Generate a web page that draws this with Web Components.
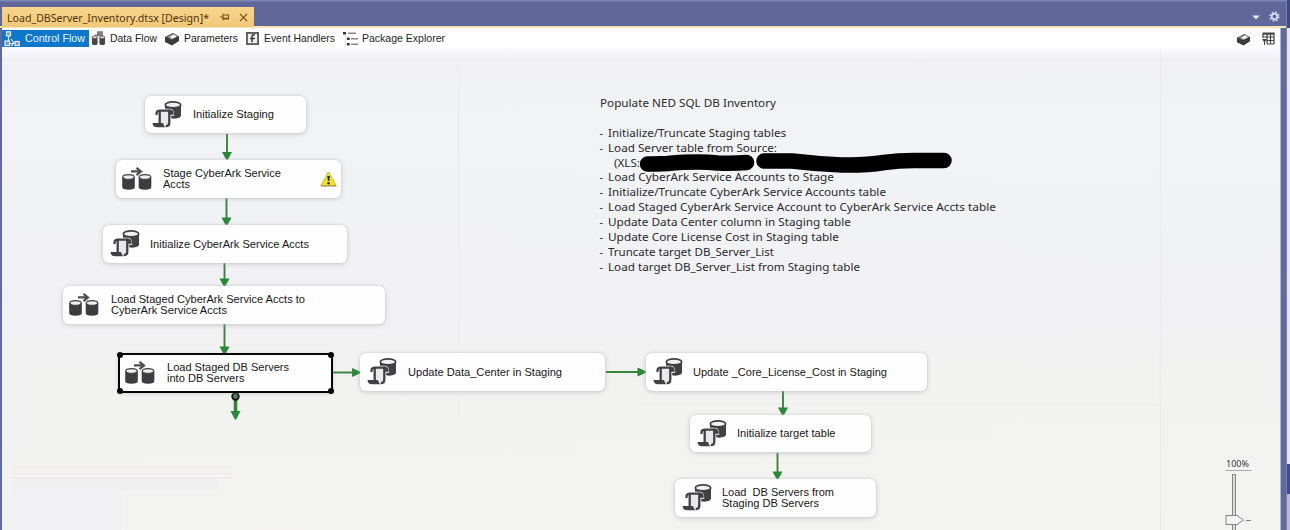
<!DOCTYPE html>
<html lang="en"><head><meta charset="utf-8"><title>Load_DBServer_Inventory.dtsx</title>
<style>html,body{margin:0;width:1290px;height:530px;overflow:hidden;background:#62699e}</style></head>
<body><package-designer></package-designer>
<script>
// Single line of text stretched to an exact advance width.
class FitText extends HTMLElement{
  connectedCallback(){
    const r=this.attachShadow({mode:'open'});
    r.innerHTML='<style>:host{display:block;white-space:pre}span{display:inline-block;transform-origin:0 50%}</style><span><slot></slot></span>';
    const s=r.querySelector('span'),w=+this.getAttribute('width');
    const n=s.getBoundingClientRect().width;
    this.style.width=w+'px';
    s.style.transform=`scaleX(${w/n})`;
  }
}

const ICONS={
script:['0 0 30 27','<path d="M13 4v8l6 5.300c5 1 10-.3 10-3V4z" fill="#414145"/><ellipse cx="21" cy="3.900" rx="7.700" ry="3" fill="#f1f1f1" stroke="#414145" stroke-width="1.700"/><path d="M6 9h11.500q3.500 0 3.500 4.500H18v8q0 4-3 4H5z" fill="#eee" stroke="#fff" stroke-width="2.400"/><path d="M7.500 10h10v12q0 3-2.500 3H5q2.500-.5 2.500-4z" fill="#e9e9eb"/><path d="M4.600 14q-.6-4.400 2.900-4.400h10.500M7.700 10v12.500M17.300 10v11.500q0 3.700-3.500 3.700" fill="none" stroke="#414145" stroke-width="2.300"/><path d="M16.500 8.500h2q3.300.3 3.300 5.200h-5z" fill="#414145"/><path d="M.5 22h10.500q.3 3 3 4.300H5q-4.200 0-4.500-4.300z" fill="#414145"/>'],
flow:['0 0 30 23','<path d="M9 4.400h9M14.500.8l4.500 3.600-4.500 3.800" fill="none" stroke="#4b5053" stroke-width="2.200"/><path d="M.2 10v10q0 2.700 6.300 2.700t6.300-2.700V10zM16.700 10v10q0 2.700 6.300 2.700t6.300-2.700V10z" fill="#3d3d40"/><g fill="#eee" stroke="#444" stroke-width="1.200"><ellipse cx="6.500" cy="10" rx="5.700" ry="2.400"/><ellipse cx="23" cy="10" rx="5.700" ry="2.400"/></g>'],
warn:['0 0 17 16','<path d="M8.500 1 16 14.500H1z" fill="#f6e51d" stroke="#c9b62a" stroke-linejoin="round"/><path d="M1 15h15.500" stroke="#8f875c"/><path d="M7.300 5h2.600l-.6 5H7.900z" fill="#292600"/><circle cx="8.600" cy="12.200" r="1.200" fill="#292600"/>'],
control:['0 0 16 16','<g fill="#7d93a8" stroke="#e4edf5" stroke-width="1.200"><rect x="2.500" y=".8" width="4" height="4"/><rect x="1" y="10" width="4.500" height="4.500"/><rect x="11" y="10.500" width="4.200" height="4"/><path d="M4.500 5v5M5.500 12.500H9M7 8l3 4-3 3" fill="none"/></g>'],
data:['0 0 16 16','<path d="M4 4.500h8M7 1h5v4H7z" fill="#888" stroke="#777" stroke-width="1.300"/><path d="M1 7v6q0 2 3 2t3-2V7zM9 7v6q0 2 3 2t3-2V7z" fill="#4b4545"/><g fill="#ddd" stroke="#5c5959"><ellipse cx="4" cy="6.700" rx="2.700" ry="1.500"/><ellipse cx="12" cy="6.700" rx="2.700" ry="1.500"/></g>'],
box:['0 0 16 14','<path d="M1 5 9 1l6 3.500v4.500l-7 4.500L1 10z" fill="#3c3939"/><path d="m2.500 5 6.800-3.300L13.800 4.500 7.500 7.800z" fill="#888"/><path d="m5.500 4.800 4.500-2.300 2.800 2-4.500 2.300z" fill="#f4f4f4"/>'],
event:['0 0 14 14','<rect x="1" y="1" width="12" height="12" fill="#eee" stroke="#4b4b4d" stroke-width="1.800"/><path d="M9.500 3H7.800Q6.500 3.300 6.500 5v6M4.500 7h5" fill="none" stroke="#35353a" stroke-width="1.600"/>'],
explorer:['0 0 16 16','<g fill="#333"><rect x="0" y="1" width="3" height="2.500"/><rect x="4" y="6.500" width="2.700" height="2.500"/><rect x="4" y="12" width="2.700" height="2.500"/></g><path d="M5 2.200h8M8 7.700h7M8 13.200h7" stroke="#8b8585" stroke-width="1.500"/><path d="M2.500 4v9.500H4" fill="none" stroke="#ddd"/>'],
grid:['0 0 14 14','<path d="M2 2h11v10H6M2 2v4M2 5h11M6 8.500h7M6 2v10M9.500 2v10" fill="none" stroke="#464447" stroke-width="1.200"/><path d="M1.500 1.500h12" stroke="#464447" stroke-width="2"/><path d="M1 7h5l-2 3v3H3v-3z" fill="#464447"/>'],
pin:['0 0 10 8','<path d="M0 4h3M3 .7v6.600M3 2h5.500v4H3M3 5.300h5.500" fill="none" stroke="#70501d" stroke-width="1.100"/>'],
close:['0 0 10 10','<path d="m1 1 8 8M9 1 1 9" stroke="#70501d" stroke-width="1.400"/>'],
caret:['0 0 8 5','<path d="M.3.5h7.400L4 4.500z" fill="#e5eaff"/>'],
gear:['0 0 12 12','<circle cx="6" cy="6" r="4.700" fill="none" stroke="#d3daf5" stroke-width="1.800" stroke-dasharray="2 1.690"/><circle cx="6" cy="6" r="3" fill="none" stroke="#e3e8fc" stroke-width="1.600"/>']
};
class UiIcon extends HTMLElement{
  connectedCallback(){
    const [b,p]=ICONS[this.getAttribute('name')];
    this.attachShadow({mode:'open'}).innerHTML=`<style>:host{display:block;flex:none}svg{display:block;width:100%;height:100%}</style><svg viewBox="${b}" preserveAspectRatio="none">${p}</svg>`;
  }
}

class FlowTask extends HTMLElement{
  connectedCallback(){
    const sel=this.hasAttribute('selected'),ic=this.getAttribute('icon');
    this.attachShadow({mode:'open'}).innerHTML=`<style>
:host{display:flex;align-items:center;box-sizing:border-box;background:#fefefe;border-radius:6px;box-shadow:0 1px 5px #9a9aa870,0 0 2px #d0d0d6;font:10.500px/11.500px "Liberation Sans",Arial,sans-serif;color:#161616}
:host([selected]){border-radius:1px;outline:2px solid #050505;outline-offset:-1px}
.i{width:30px;height:${ic=='flow'?23:27}px;margin-left:${ic=='flow'?6:7}px;margin-right:${ic=='flow'?11.5:10.5}px}
.w{width:17px;height:16px;margin:1px 4px 0 auto}
.l{margin-top:1px}
b{position:absolute;width:6px;height:6px;border-radius:50%;background:#050505}
</style><ui-icon class="i" name="${ic}"></ui-icon><div class="l"><slot></slot></div>${this.hasAttribute('warning')?'<ui-icon class="w" name="warn"></ui-icon>':''}${sel?'<b style="left:-2px;top:-2px"></b><b style="right:-2px;top:-2px"></b><b style="left:-2px;bottom:-2px"></b><b style="right:-2px;bottom:-2px"></b>':''}`;
  }
}

class DocumentTabs extends HTMLElement{
  connectedCallback(){
    this.attachShadow({mode:'open'}).innerHTML=`<style>
:host{display:flex;box-sizing:border-box;height:28px;padding:7px 0 0 2px;background:linear-gradient(#8086b3 0 1px,#60679b 2px);border-bottom:2px solid #f3e5b4}
.tab{width:252px;height:20px;box-sizing:border-box;background:linear-gradient(#f8d58b,#f2c878);display:flex;align-items:center;padding-left:4.500px;font:11.500px/20px "Noto Sans","Open Sans",sans-serif;color:#4b3512}
.tab fit-text{margin-top:2px}
.p{width:10px;height:8px;margin-left:11px}.x{width:9px;height:9px;margin-left:9px}
.r{margin-left:auto;display:flex;align-items:center;gap:9px;padding-right:10px}
</style><div class="tab"><fit-text width="202">Load_DBServer_Inventory.dtsx [Design]*</fit-text><ui-icon class="p" name="pin"></ui-icon><ui-icon class="x" name="close"></ui-icon></div>
<div class="r"><ui-icon name="caret" style="width:8px;height:5px;margin-top:2px"></ui-icon><ui-icon name="gear" style="width:11px;height:11px"></ui-icon></div>`;
  }
}

class DesignerToolbar extends HTMLElement{
  connectedCallback(){
    this.attachShadow({mode:'open'}).innerHTML=`<style>
:host{display:flex;height:20px;margin:0 10px 0 2px;padding-top:2px;background:#fff;font:10.500px/17px "Liberation Sans",Arial,sans-serif;color:#1d1d1d;box-sizing:border-box}
.t{height:17px;display:flex;align-items:center;box-sizing:border-box}
.s{background:#0c77cb;color:#e7f5ff}
.r{margin-left:auto;display:flex;gap:10px;padding-right:5px;align-items:center}
</style>
<div class="t s" style="width:87px;padding-left:2px"><ui-icon name="control" style="width:16px;height:16px;margin-right:5px"></ui-icon><fit-text width="60">Control Flow</fit-text></div>
<div class="t" style="width:75px;padding-left:2px"><ui-icon name="data" style="width:15px;height:15px;margin-right:4px"></ui-icon><fit-text width="47">Data Flow</fit-text></div>
<div class="t" style="width:82px"><ui-icon name="box" style="width:16px;height:14px;margin-right:4px"></ui-icon><fit-text width="54">Parameters</fit-text></div>
<div class="t" style="width:97px"><ui-icon name="event" style="width:13px;height:13px;margin-right:5px"></ui-icon><fit-text width="71">Event Handlers</fit-text></div>
<div class="t"><ui-icon name="explorer" style="width:16px;height:16px;margin-right:3px"></ui-icon><fit-text width="83">Package Explorer</fit-text></div>
<div class="r"><ui-icon name="box" style="width:15px;height:13px"></ui-icon><ui-icon name="grid" style="width:14px;height:14px"></ui-icon></div>`;
  }
}

class FlowCanvas extends HTMLElement{
  connectedCallback(){
    const tasks=[
      [145,96,161,37,'script','',['Initialize Staging',81]],
      [115.5,159.5,225,38,'flow','warning',['Stage CyberArk Service',118],['Accts',27]],
      [102.5,225,244.500,37.500,'script','',['Initialize CyberArk Service Accts',159]],
      [63,286,321.500,37.500,'flow','',['Load Staged CyberArk Service Accts to',194],['CyberArk Service Accts',116]],
      [119,354,212.500,37.500,'flow','selected',['Load Staged DB Servers',122],['into DB Servers',77.500]],
      [360,353,245,37.500,'script','',['Update Data_Center in Staging',154]],
      [645.500,353,281.500,37.500,'script','',['Update _Core_License_Cost in Staging',194]],
      [689.500,415,181.500,37,'script','',['Initialize target table',98.500]],
      [674.500,479,201,37.500,'script','',['Load  DB Servers from',112],['Staging DB Servers',97]]];
    const down=[[227,134,159.500],[226.500,198,225],[224.500,263,286],[224.500,324,354],[783,391,415],[777.500,453,479]];
    const right=[[372.500,332,360],[372,606,645.500]];
    const note=[['Populate NED SQL DB Inventory',176,0],['',0,0],['Initialize/Truncate Staging tables',178,1],['Load Server table from Source:',169,1],['(XLS:',26,14],['Load CyberArk Service Accounts to Stage',226,1],['Initialize/Truncate CyberArk Service Accounts table',278,1],['Load Staged CyberArk Service Account to CyberArk Service Accts table',388,1],['Update Data Center column in Staging table',243,1],['Update Core License Cost in Staging table',231,1],['Truncate target DB_Server_List',166,1],['Load target DB_Server_List from Staging table',252,1]];
    const oy=48,ox=2;
    this.attachShadow({mode:'open'}).innerHTML=`<style>
:host{display:block;position:relative;height:482px;margin:0 10px 0 2px;overflow:hidden;background:linear-gradient(90deg,#e9f0fa 0,#f3f0f3 8px,#f3f3f1 100%)}
:host::before{content:"";position:absolute;inset:0;background:linear-gradient(#fbfaff 0,#f0f0f5 12px,#f1f3f4 70px,#f1f1f5 250px,#f2f2f0 340px,#f3f3ef 100%);opacity:.9}
svg.c{position:absolute;left:0;top:0}
flow-task,.note,.zoom{position:absolute}
.note{left:597.500px;top:48px;font:11px/14.900px "Noto Sans","Open Sans",sans-serif;color:#2a2b2d}
.note div{height:14.900px;display:flex}
.zoom{left:1224px;top:409px;font:9.500px/14px "Noto Sans",sans-serif;color:#38383a}
</style>
<svg class="c" width="1278" height="482" viewBox="${ox} ${oy} 1278 482">
<path d="M458.500 64v352M1160.500 52v478" stroke="#ebebef" fill="none"/>
<path d="M640 405h520V64" stroke="#f0eef0" fill="none"/>
<rect x="12" y="465" width="220" height="11" fill="#f3efec"/><path d="M12 476.500h220" stroke="#fff"/><path d="M12 477.500h220" stroke="#e3e1e1"/><rect x="12" y="478" width="206" height="13" fill="#efefef"/>
<rect x="12" y="491" width="110" height="39" fill="#f1f1f4"/>
<g stroke="#35853e" stroke-width="1.900">${down.map(([x,a,b])=>`<path d="M${x} ${a}V${b-5}"/>`).join('')}${right.map(([y,a,b])=>`<path d="M${a} ${y}H${b-6}"/>`).join('')}</g>
<g fill="#2b8837">${down.map(([x,a,b])=>`<path d="M${x-5} ${b-7.500}h10l-4 7.500h-2z"/>`).join('')}${right.map(([y,a,b])=>`<path d="M${b-8} ${y-4.500}v9l8-3.500v-2z"/>`).join('')}
<path d="M233.700 399h3.600v12h3.200l-4.300 8.500h-1.400l-4.300-8.500h3.200z"/></g>
<circle cx="235.500" cy="396.500" r="3.300" fill="#4d805a" stroke="#111" stroke-width="1.800"/>
</svg>
${tasks.map(([x,y,w,h,i,f,...l])=>`<flow-task icon="${i}" ${f} style="left:${x-ox}px;top:${y-oy}px;width:${w}px;height:${h}px">${l.map(([t,n])=>`<fit-text width="${n}">${t}</fit-text>`).join('')}</flow-task>`).join('')}
<div class="note">${note.map(([t,w,p])=>`<div style="padding-left:${p==14?14:0}px">${p==1?'<span style="width:8.500px">-</span>':''}${t?`<fit-text width="${w}">${t}</fit-text>`:''}</div>`).join('')}</div>
<svg class="c" width="1278" height="482" viewBox="${ox} ${oy} 1278 482">
<g fill="none" stroke="#000" stroke-linecap="round" stroke-linejoin="round" stroke-width="15.500"><path d="M647.500 164q8 0 20-.5 30-2.500 50-.5 16 .5 29-.5"/><path d="M764 161h28q25 3 50 4 24 .5 42-2.500 14-2 30-2h30"/></g>
<g fill="#f5f5f5" stroke="#828284"><path d="M1225.500 470.500h26" stroke="#aaa"/><path d="M1232.500 474.500h3v60h-3z" fill="#ddd"/><path d="M1226 515.500h11l6.500 4.500-6.500 4.500h-11z"/><path d="M1246 520.500h5"/></g>
</svg>
<div class="zoom"><fit-text width="23">100%</fit-text></div>`;
  }
}

class PackageDesigner extends HTMLElement{
  connectedCallback(){
    this.attachShadow({mode:'open'}).innerHTML=`<style>
:host{display:grid;grid-template-columns:1290px;grid-template-rows:28px 20px 482px;width:1290px;height:530px;background:#62699e;position:relative}
.edge{position:absolute;right:0;top:0;width:4px;height:530px;box-sizing:border-box;background:linear-gradient(#3f4a87 0 28px,#e4e6f0 28px 464px,#3f4c91 464px 494px,#b9bbc8 494px);border-left:1px solid #7880ae}
.line{position:absolute;right:9px;top:28px;width:1px;bottom:0;background:#9bbfe0}
</style><document-tabs></document-tabs><designer-toolbar></designer-toolbar><flow-canvas></flow-canvas><div class="edge"></div><div class="line"></div>`;
  }
}
customElements.define('fit-text',FitText);
customElements.define('ui-icon',UiIcon);
customElements.define('flow-task',FlowTask);
customElements.define('document-tabs',DocumentTabs);
customElements.define('designer-toolbar',DesignerToolbar);
customElements.define('flow-canvas',FlowCanvas);
customElements.define('package-designer',PackageDesigner);
</script></body></html>
